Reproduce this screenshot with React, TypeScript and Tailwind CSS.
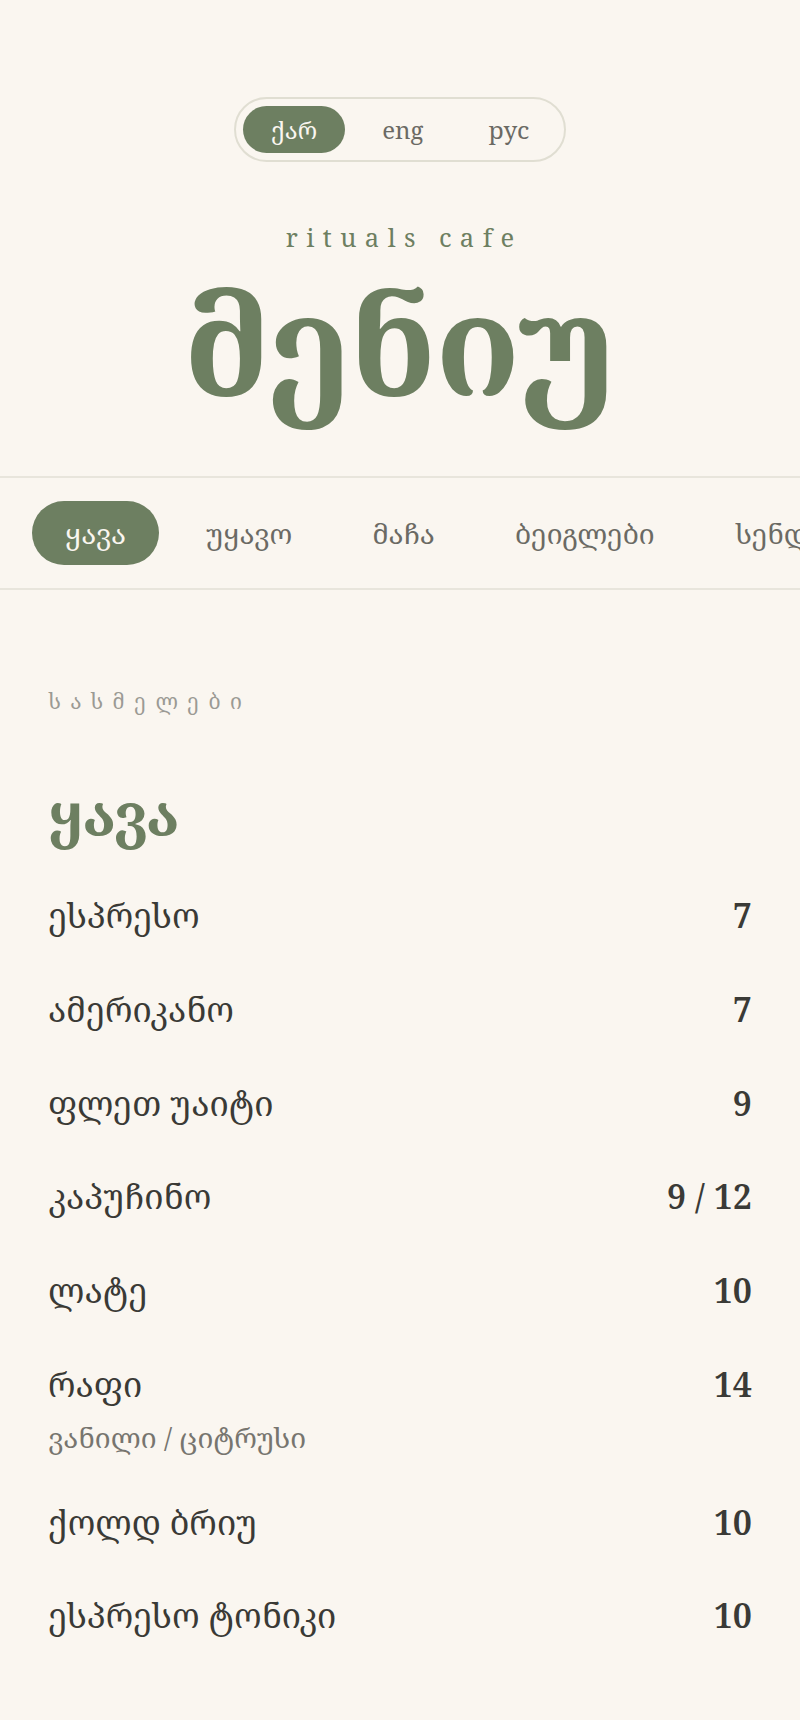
import React from 'react';

const langs = ['ქარ', 'eng', 'рус'];
const tabs = ['ყავა', 'უყავო', 'მაჩა', 'ბეიგლები', 'სენდვიჩები', 'დესერტები'];

const items: { name: string; price: string; note?: string }[] = [
  { name: 'ესპრესო', price: '7' },
  { name: 'ამერიკანო', price: '7' },
  { name: 'ფლეთ უაიტი', price: '9' },
  { name: 'კაპუჩინო', price: '9 / 12' },
  { name: 'ლატე', price: '10' },
  { name: 'რაფი', price: '14', note: 'ვანილი / ციტრუსი' },
  { name: 'ქოლდ ბრიუ', price: '10' },
  { name: 'ესპრესო ტონიკი', price: '10' },
];

export default function App() {
  return (
    <div className="min-h-screen overflow-hidden bg-[#faf6f0] font-['Noto_Serif','Noto_Serif_Georgian',serif] text-[#3a3a36]">
      <header className="flex flex-col items-center pt-[97px]">
        {/* language switch */}
        <div className="flex gap-[9px] rounded-full border-2 border-[#e0ded2] p-[7px]">
          {langs.map((l, i) => (
            <button
              key={l}
              className={
                i === 0
                  ? 'h-[47px] rounded-full bg-[#6d7f61] px-7 text-[24px] text-[#faf6f0]'
                  : 'h-[47px] rounded-full px-7 text-[24px] text-[#6b6a64]'
              }
            >
              {l}
            </button>
          ))}
        </div>
        <p className="mt-[63px] pl-[0.33em] text-[25.5px] leading-none tracking-[0.33em] text-[#6d7f61]">
          rituals cafe
        </p>
        <h1 className="text-[140px] font-bold leading-[180px] text-[#6d7f61]">მენიუ</h1>
      </header>

      {/* categories */}
      <nav className="mt-[45px] flex gap-[14px] overflow-hidden whitespace-nowrap border-y-2 border-[#e8e5dc] px-8 py-[23px]">
        {tabs.map((t, i) => (
          <span
            key={t}
            className={
              i === 0
                ? 'flex h-16 shrink-0 items-center rounded-full bg-[#6d7f61] px-[33px] text-[28px] text-[#faf6f0]'
                : 'flex h-16 shrink-0 items-center rounded-full px-[33px] text-[28px] text-[#6b6a64]'
            }
          >
            {t}
          </span>
        ))}
      </nav>

      <main className="px-12 pb-16 pt-[96px]">
        <p className="text-[21px] tracking-[0.45em] text-[#9b9a94]">სასმელები</p>
        <h2 className="mt-[67px] text-[58px] font-bold leading-none text-[#6d7f61]">ყავა</h2>
        <ul className="mt-[27px]">
          {items.map((it) => (
            <li key={it.name} className="py-[27px]">
              <div className="flex items-baseline justify-between">
                <span className="text-[34px] leading-[39.75px]">{it.name}</span>
                <span className="text-[34px] font-semibold leading-[39.75px]">{it.price}</span>
              </div>
              {it.note && <p className="mt-[20px] text-[28px] leading-[24px] text-[#77756f]">{it.note}</p>}
            </li>
          ))}
        </ul>
      </main>
    </div>
  );
}
